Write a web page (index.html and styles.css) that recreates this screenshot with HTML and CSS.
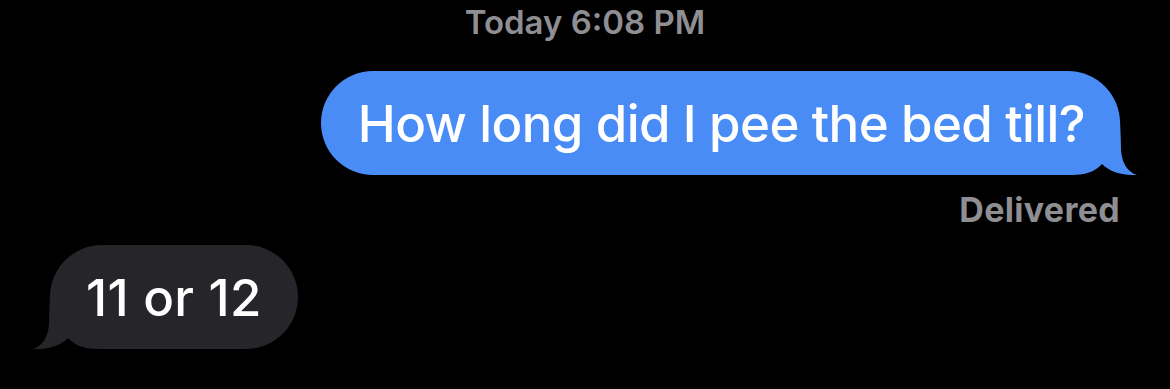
FILE: index.html
```html
<!DOCTYPE html>
<html lang="en">
<head>
<meta charset="utf-8">
<link rel="stylesheet" href="styles.css">
</head>
<body>
<main class="thread">
  <div class="stamp"><span class="stamp-day">Today</span> 6:08 PM</div>
  <div class="row row-out">
    <div class="bubble bubble-out">
      <span class="bubble-text">How long did I pee the bed till?</span>
      <svg class="tail tail-out" width="78" height="55" viewBox="0 0 78 55" aria-hidden="true">
        <path d="M0 0 H60 C60.5 12 61 22 61 30 C62 44 68 52 77 55 C62 55.5 50 52 42 44 C35 52 25 55 10 55 H0 Z"/>
      </svg>
    </div>
  </div>
  <div class="status">Delivered</div>
  <div class="row row-in">
    <div class="bubble bubble-in">
      <span class="bubble-text">11 or 12</span>
      <svg class="tail tail-in" width="78" height="55" viewBox="0 0 78 55" aria-hidden="true">
        <path d="M0 0 H60 C60.5 12 61 22 61 30 C62 44 68 52 77 55 C62 55.5 50 52 42 44 C35 52 25 55 10 55 H0 Z"/>
      </svg>
    </div>
  </div>
</main>
</body>
</html>
```
FILE: styles.css
```css
html, body {
  margin: 0;
  background: #000;
}
body {
  font-family: Inter, "Noto Sans", sans-serif;
  width: 1170px;
  height: 389px;
  overflow: hidden;
}
.thread {
  display: flex;
  flex-direction: column;
}
.stamp {
  text-align: center;
  color: #8e8e93;
  font-size: 33px;
  font-weight: 600;
  line-height: 38px;
  padding-top: 3px;
}
.row {
  display: flex;
}
.row-out {
  justify-content: flex-end;
  padding-right: 50px;
  margin-top: 30px;
}
.row-in {
  justify-content: flex-start;
  padding-left: 50px;
  margin-top: 15px;
}
.bubble {
  position: relative;
  height: 104px;
  border-radius: 52px;
  display: flex;
  align-items: center;
  padding: 0 35px 0 37px;
  box-sizing: border-box;
  color: #fff;
  font-size: 51px;
  font-weight: 500;
  letter-spacing: -0.6px;
}
.bubble-text {
  position: relative;
  z-index: 1;
}
.bubble-out {
  background: #4a8cf6;
}
.bubble-in {
  background: #26252a;
  padding: 0 36px 0 36px;
  letter-spacing: 0.4px;
}
.tail {
  position: absolute;
  bottom: 0;
}
.tail-out {
  right: -18px;
  fill: #4a8cf6;
}
.tail-in {
  left: -18px;
  fill: #26252a;
  transform: scaleX(-1);
}
.status {
  align-self: flex-end;
  padding-right: 50px;
  margin-top: 15px;
  color: #8e8e93;
  font-size: 34px;
  font-weight: 700;
  line-height: 40px;
  letter-spacing: 0.3px;
}
```
